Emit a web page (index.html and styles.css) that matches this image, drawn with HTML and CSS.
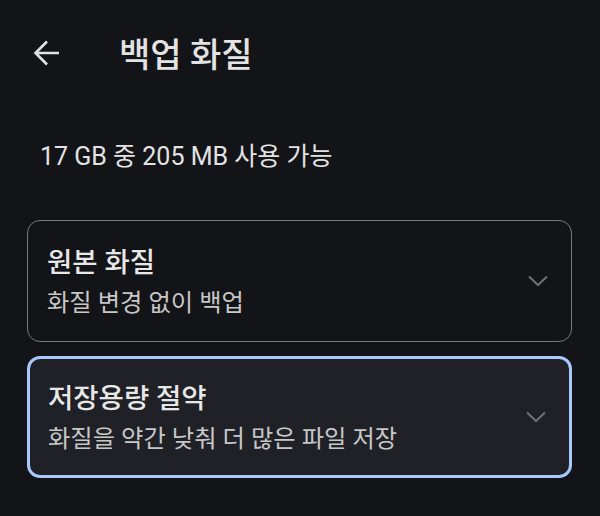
FILE: index.html
```html
<!DOCTYPE html>
<html lang="ko">
<head>
    <meta charset="UTF-8">
    <meta name="viewport" content="width=device-width, initial-scale=1.0">
    <title>백업 화질</title>
    <link rel="stylesheet" href="styles.css">
</head>
<body>
    <div class="top-bar">
        <button class="back-btn" aria-label="뒤로">
            <svg width="28" height="28" viewBox="0 0 28 28">
                <path d="M26 14H3M14 2.5L2.5 14L14 25.5" fill="none" stroke="#e3e3e3" stroke-width="2.6"/>
            </svg>
        </button>
        <h1>백업 화질</h1>
    </div>

    <p class="storage">17 GB 중 205 MB 사용 가능</p>

    <div class="options">
        <div class="option">
            <div class="option-text">
                <div class="option-title">원본 화질</div>
                <div class="option-desc">화질 변경 없이 백업</div>
            </div>
            <svg class="chevron" width="20" height="12" viewBox="0 0 20 12">
                <path d="M1 1.5L10 10L19 1.5" fill="none" stroke="#6f7175" stroke-width="2"/>
            </svg>
        </div>
        <div class="option selected">
            <div class="option-text">
                <div class="option-title">저장용량 절약</div>
                <div class="option-desc">화질을 약간 낮춰 더 많은 파일 저장</div>
            </div>
            <svg class="chevron" width="20" height="12" viewBox="0 0 20 12">
                <path d="M1 1.5L10 10L19 1.5" fill="none" stroke="#6f7175" stroke-width="2"/>
            </svg>
        </div>
    </div>
</body>
</html>
```

FILE: styles.css
```css
body {
    background-color: #131418;
    color: #e3e3e3;
    font-family: 'Roboto', 'Noto Sans CJK KR', sans-serif;
    margin: 0;
    padding: 0;
    width: 600px;
    height: 516px;
    overflow: hidden;
}

.top-bar {
    display: flex;
    align-items: center;
    height: 106px;
}

.back-btn {
    background: none;
    border: none;
    padding: 0;
    margin-left: 33px;
    width: 28px;
    height: 28px;
    display: flex;
}

.top-bar h1 {
    margin: 4px 0 0 58px;
    font-size: 34px;
    font-weight: 500;
    color: #e3e3e3;
    line-height: 40px;
}

.storage {
    margin: 37px 0 0 40px;
    font-size: 25px;
    line-height: 28px;
    color: #e3e3e3;
}

.options {
    display: flex;
    flex-direction: column;
    gap: 14px;
    margin: 49px 28px 0 27px;
}

.option {
    box-sizing: border-box;
    height: 122px;
    border: 1.5px solid #76787c;
    border-radius: 13px;
    display: flex;
    align-items: center;
    padding: 0 23px 0 19px;
}

.option.selected {
    border: 3px solid #a8c7fa;
    background-color: #1f2127;
    padding-left: 18px;
}

.option-text {
    flex: 1;
    padding-top: 4px;
}

.option-title {
    font-size: 27.5px;
    font-weight: 500;
    line-height: 40px;
    color: #e8e8e8;
}

.option-desc {
    font-size: 24.3px;
    line-height: 40px;
    color: #c7c7c7;
}

.chevron {
    flex-shrink: 0;
}
```
